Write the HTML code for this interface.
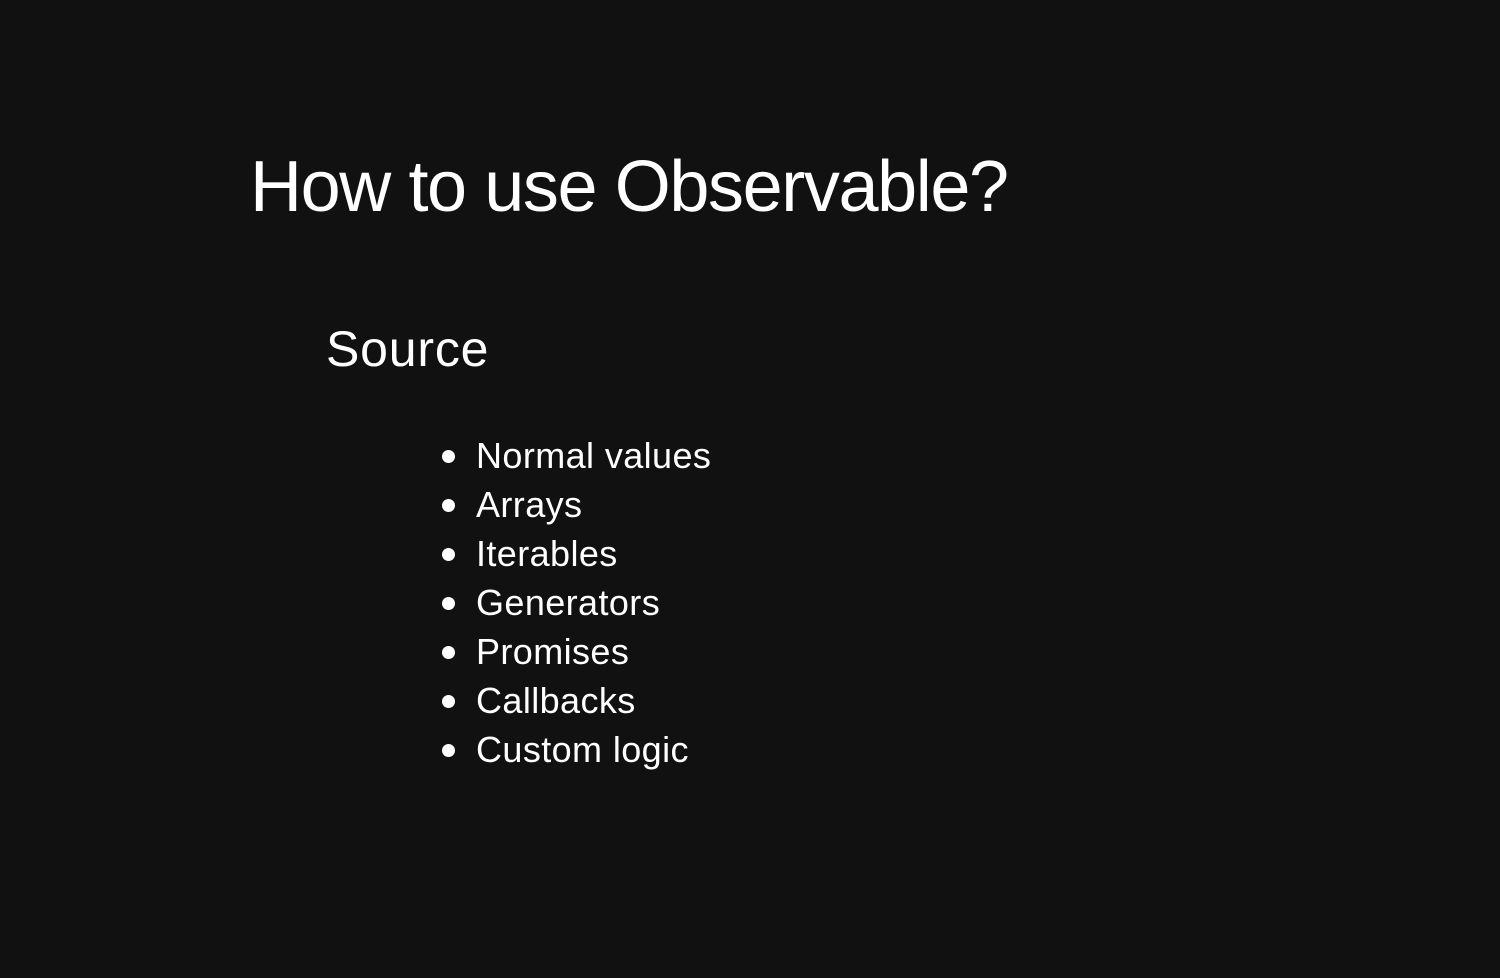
<!DOCTYPE html>
<html><head><style>
html,body{margin:0;padding:0;background:#111;width:1500px;height:978px;overflow:hidden;color:#fff;font-family:"Liberation Sans",sans-serif;}
h1{position:absolute;left:250px;top:146px;margin:0;font-weight:normal;font-size:72px;line-height:82px;letter-spacing:-1.4px;}
h2{position:absolute;left:326px;top:320px;margin:0;font-weight:normal;font-size:50px;line-height:58px;letter-spacing:0.8px;}
ul{position:absolute;left:476px;top:431px;margin:0;padding:0;list-style:none;}
li{font-size:36px;line-height:49px;position:relative;letter-spacing:0.4px;}
li:before{content:"";position:absolute;left:-34px;top:19px;width:13px;height:13px;border-radius:50%;background:#fff;}
</style></head><body>
<h1>How to use Observable?</h1>
<h2>Source</h2>
<ul>
<li>Normal values</li><li>Arrays</li><li>Iterables</li><li>Generators</li><li>Promises</li><li>Callbacks</li><li>Custom logic</li>
</ul>
</body></html>
